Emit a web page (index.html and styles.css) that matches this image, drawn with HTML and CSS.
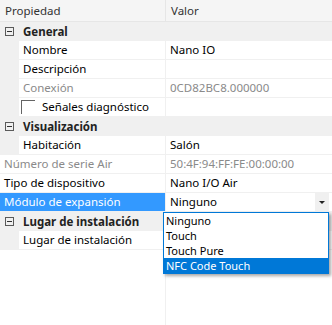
FILE: index.html
```html
<!DOCTYPE html>
<html lang="es">
<head>
    <meta charset="UTF-8" />
    <title>Propiedades</title>
    <link rel="stylesheet" href="styles.css">
</head>
<body>

    <div class="grid">
        <div class="head">
            <div class="name">Propiedad</div>
            <div class="value">Valor</div>
        </div>

        <div class="row group">
            <span class="toggle"></span>
            <span class="label">General</span>
        </div>
        <div class="row child">
            <div class="gutter"></div>
            <div class="name">Nombre</div>
            <div class="value">Nano IO</div>
        </div>
        <div class="row child">
            <div class="gutter"></div>
            <div class="name">Descripción</div>
            <div class="value"></div>
        </div>
        <div class="row child readonly">
            <div class="gutter"></div>
            <div class="name">Conexión</div>
            <div class="value">0CD82BC8.000000</div>
        </div>
        <div class="row child">
            <div class="gutter"></div>
            <div class="name check-name"><span class="checkbox"></span>Señales diagnóstico</div>
            <div class="value"></div>
        </div>

        <div class="row group">
            <span class="toggle"></span>
            <span class="label">Visualización</span>
        </div>
        <div class="row child">
            <div class="gutter"></div>
            <div class="name">Habitación</div>
            <div class="value">Salón</div>
        </div>

        <div class="row top readonly">
            <div class="name">Número de serie Air</div>
            <div class="value">50:4F:94:FF:FE:00:00:00</div>
        </div>
        <div class="row top">
            <div class="name">Tipo de dispositivo</div>
            <div class="value">Nano I/O Air</div>
        </div>
        <div class="row top selected">
            <div class="name">Módulo de expansión</div>
            <div class="value combo">
                <span class="combo-text">Ninguno</span>
                <span class="combo-btn"><span class="arrow"></span></span>
            </div>
        </div>

        <div class="row group">
            <span class="toggle"></span>
            <span class="label">Lugar de instalación</span>
        </div>
        <div class="row child">
            <div class="gutter"></div>
            <div class="name">Lugar de instalación</div>
            <div class="value"></div>
        </div>

        <div class="filler">
            <div class="name"></div>
        </div>

        <ul class="dropdown">
            <li>Ninguno</li>
            <li>Touch</li>
            <li>Touch Pure</li>
            <li class="active">NFC Code Touch</li>
        </ul>
    </div>

</body>
</html>
```

FILE: styles.css
```css
* {
    margin: 0;
    padding: 0;
    box-sizing: border-box;
}

body {
    font-family: 'Noto Sans', 'Segoe UI', sans-serif;
    font-size: 11.5px;
    color: #000;
    background-color: #fff;
    width: 332px;
    height: 325px;
    overflow: hidden;
}

.grid {
    position: relative;
    display: flex;
    flex-direction: column;
    height: 325px;
}

.head {
    display: flex;
    height: 22px;
    line-height: 21px;
    background-color: #f5f5f5;
    border-bottom: 1px solid #e6e6e6;
    color: #333;
}

.head .name {
    width: 166px;
    padding-left: 5px;
    border-right: 1px solid #e6e6e6;
}

.head .value {
    flex: 1;
    padding-left: 5px;
}

.row {
    display: flex;
    align-items: stretch;
    height: 19px;
    line-height: 18px;
    white-space: nowrap;
}

.row.group {
    align-items: center;
    background-color: #f0f0f0;
}

.toggle {
    position: relative;
    width: 9px;
    height: 9px;
    margin-left: 5px;
    margin-right: 9px;
    border: 1px solid #5a5a5a;
}

.toggle::after {
    content: '';
    position: absolute;
    left: 1px;
    top: 3px;
    width: 5px;
    height: 1px;
    background-color: #333;
}

.group .label {
    font-weight: bold;
    color: #222;
}

.row.child,
.row.top {
    border-bottom: 1px solid #f0f0f0;
}

.gutter {
    width: 19px;
    background-color: #f0f0f0;
}

.row .name {
    width: 147px;
    padding-left: 4px;
    border-right: 1px solid #f0f0f0;
    overflow: hidden;
}

.row.top .name {
    width: 166px;
    padding-left: 4px;
}

.row .value {
    flex: 1;
    padding-left: 4px;
}

.readonly .name,
.readonly .value {
    color: #8a8a8a;
}

.check-name {
    display: flex;
    align-items: flex-start;
}

.row .check-name {
    padding-left: 2px;
}

.checkbox {
    width: 14px;
    height: 14px;
    margin-top: 2px;
    margin-right: 7px;
    border-top: 1px solid #646464;
    border-left: 1px solid #646464;
}

.selected .name {
    background-color: #3399ff;
    color: #fff;
}

.combo {
    display: flex;
    padding-right: 3px;
}

.combo-text {
    flex: 1;
}

.combo-btn {
    display: flex;
    align-items: center;
    justify-content: center;
    width: 14px;
    background-color: #f0f0f0;
}

.arrow {
    width: 0;
    height: 0;
    border-left: 3px solid transparent;
    border-right: 3px solid transparent;
    border-top: 3px solid #222;
}

.filler {
    flex: 1;
    display: flex;
}

.filler .name {
    width: 166px;
    border-right: 1px solid #f0f0f0;
}

.dropdown {
    position: absolute;
    left: 163px;
    top: 212px;
    width: 166px;
    list-style: none;
    background-color: #fff;
    border: 1px solid #0078d7;
    box-shadow: 2px 2px 3px rgba(0, 0, 0, 0.35);
}

.dropdown li {
    height: 15px;
    line-height: 15px;
    padding-left: 2px;
    font-size: 11px;
}

.dropdown li.active {
    background-color: #0078d7;
    color: #fff;
}
```
